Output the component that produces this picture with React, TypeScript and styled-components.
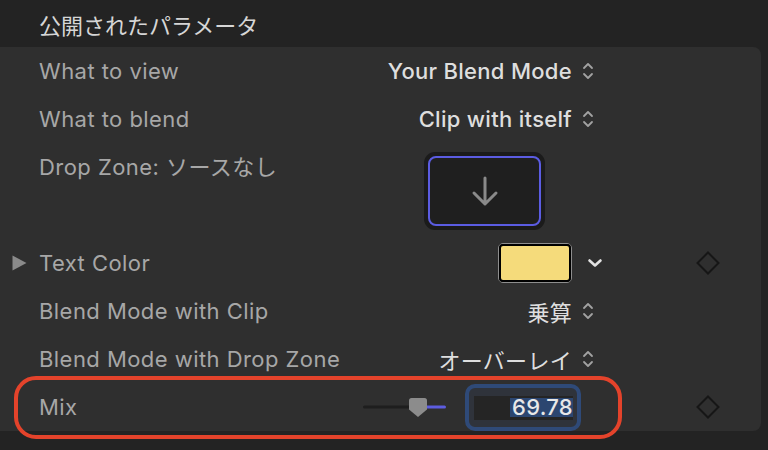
import styled, { createGlobalStyle } from 'styled-components'

const GlobalStyle = createGlobalStyle`
  html, body {
    margin: 0;
    padding: 0;
    background: #232323;
  }
  body {
    font-family: Inter, "Noto Sans CJK JP", sans-serif;
    -webkit-font-smoothing: antialiased;
  }
`

const Page = styled.div`
  width: 768px;
  height: 450px;
  display: flex;
  flex-direction: column;
  background: #232323;
  overflow: hidden;
`

const Header = styled.div`
  height: 47px;
  display: flex;
  align-items: center;
  padding-left: 39px;
  font-size: 22px;
  color: #d6d6d6;
`

const Panel = styled.div`
  position: relative;
  width: 761px;
  background: #2f2f2f;
  border-radius: 0 8px 8px 0;
  display: flex;
  flex-direction: column;
`

const Row = styled.div<{ $tall?: boolean }>`
  display: grid;
  grid-template-columns: 39px 1fr auto 40px 76px 40px 33px;
  align-items: center;
  height: ${(p) => (p.$tall ? 96 : 48)}px;
`

const Disclosure = styled.div`
  grid-column: 1;
  display: flex;
  justify-content: center;
`

const Label = styled.div<{ $top?: boolean }>`
  grid-column: 2;
  font-size: 22px;
  letter-spacing: 0.45px;
  color: #a7a7a7;
  white-space: nowrap;
  ${(p) => (p.$top ? 'align-self: start; line-height: 48px;' : '')}
`

const Control = styled.div`
  grid-column: 3;
  justify-self: end;
  display: flex;
  align-items: center;
`

const Value = styled.span<{ $plain?: boolean }>`
  font-size: 22px;
  letter-spacing: 0.3px;
  font-weight: ${(p) => (p.$plain ? 400 : 500)};
  color: #dedede;
  white-space: nowrap;
`

const Accessory = styled.div<{ $pad: number }>`
  grid-column: 4;
  display: flex;
  align-items: center;
  padding-left: ${(p) => p.$pad}px;
`

const Keyframe = styled.div`
  grid-column: 6;
  display: flex;
  justify-content: center;
`

const DropRing = styled.div`
  box-sizing: border-box;
  width: 121px;
  height: 78px;
  margin-right: 27px;
  padding: 4px;
  border-radius: 11px;
  background: #1b1b1b;
  display: flex;
`

const DropWell = styled.div`
  flex: 1;
  border: 2px solid #5b5ce2;
  border-radius: 8px;
  background: #1f1f1f;
  display: flex;
  align-items: center;
  justify-content: center;
`

const Swatch = styled.div`
  box-sizing: border-box;
  width: 74px;
  height: 40px;
  border: 1px solid #8e8e8e;
  border-radius: 5px;
  display: flex;
`

const SwatchFill = styled.div<{ $color: string }>`
  flex: 1;
  border: 2px solid #000;
  border-radius: 4px;
  background: ${(p) => p.$color};
`

const FieldRing = styled.div`
  box-sizing: border-box;
  margin-left: 19px;
  margin-right: -9px;
  padding: 8px 4px 7px 5px;
  border: 4px solid #2f4a78;
  border-radius: 10px;
  background: #2f333b;
`

const Field = styled.div`
  width: 99px;
  height: 24px;
  background: #252525;
  display: flex;
  align-items: center;
  justify-content: flex-end;
`

const Selected = styled.span`
  background: #2c4670;
  color: #e8e8e8;
  font-size: 22px;
  letter-spacing: 0.3px;
  font-weight: 500;
  line-height: 19px;
  padding-left: 2px;
`

const Highlight = styled.div`
  position: absolute;
  left: 14px;
  top: 329px;
  width: 608px;
  height: 63px;
  box-sizing: border-box;
  border: 4px solid #e4432b;
  border-radius: 22px;
  pointer-events: none;
`

const UpDown = () => (
  <svg width="12" height="22" viewBox="0 0 12 22">
    <path d="M2 8 L6 4 L10 8 M2 14 L6 18 L10 14" fill="none" stroke="#a2a2a2" strokeWidth="1.8" strokeLinecap="round" strokeLinejoin="round" />
  </svg>
)

const ChevronDown = () => (
  <svg width="16" height="12" viewBox="0 0 16 12">
    <path d="M2.5 3.5 L8 8.5 L13.5 3.5" fill="none" stroke="#e2e2e2" strokeWidth="2.6" strokeLinecap="round" strokeLinejoin="round" />
  </svg>
)

const Diamond = () => (
  <svg width="24" height="24" viewBox="0 0 24 24">
    <path d="M12 1.5 L22.5 12 L12 22.5 L1.5 12 Z" fill="none" stroke="#161616" strokeWidth="2" />
  </svg>
)

const Triangle = () => (
  <svg width="15" height="16" viewBox="0 0 15 16">
    <path d="M0.5 0.5 L14.5 8 L0.5 15.5 Z" fill="#8a8a8a" />
  </svg>
)

const ArrowDown = () => (
  <svg width="28" height="32" viewBox="0 0 28 32">
    <path d="M14 3 V29 M3 18 L14 29 L25 18" fill="none" stroke="#8a8a8a" strokeWidth="3" strokeLinecap="round" strokeLinejoin="round" />
  </svg>
)

const Slider = () => (
  <svg width="83" height="22" viewBox="0 0 83 22">
    <line x1="1.5" y1="11" x2="55" y2="11" stroke="#1e1e1e" strokeWidth="3" strokeLinecap="round" />
    <line x1="64" y1="11" x2="81.5" y2="11" stroke="#5d5de0" strokeWidth="3" strokeLinecap="round" />
    <path d="M48.5 2 H61.5 Q64 2 64 4.5 V13.5 L55 21 L46 13.5 V4.5 Q46 2 48.5 2 Z" fill="#8c8c8c" />
  </svg>
)

const App = () => {
  return (
    <Page>
      <GlobalStyle />
      <Header>公開されたパラメータ</Header>
      <Panel>
        <Row>
          <Label>What to view</Label>
          <Control>
            <Value>Your Blend Mode</Value>
          </Control>
          <Accessory $pad={10}>
            <UpDown />
          </Accessory>
        </Row>
        <Row>
          <Label>What to blend</Label>
          <Control>
            <Value>Clip with itself</Value>
          </Control>
          <Accessory $pad={10}>
            <UpDown />
          </Accessory>
        </Row>
        <Row $tall>
          <Label $top>Drop Zone: ソースなし</Label>
          <Control>
            <DropRing>
              <DropWell>
                <ArrowDown />
              </DropWell>
            </DropRing>
          </Control>
        </Row>
        <Row>
          <Disclosure>
            <Triangle />
          </Disclosure>
          <Label>Text Color</Label>
          <Control>
            <Swatch>
              <SwatchFill $color="#f5db7b" />
            </Swatch>
          </Control>
          <Accessory $pad={15}>
            <ChevronDown />
          </Accessory>
          <Keyframe>
            <Diamond />
          </Keyframe>
        </Row>
        <Row>
          <Label>Blend Mode with Clip</Label>
          <Control>
            <Value $plain>乗算</Value>
          </Control>
          <Accessory $pad={10}>
            <UpDown />
          </Accessory>
        </Row>
        <Row>
          <Label>Blend Mode with Drop Zone</Label>
          <Control>
            <Value $plain>オーバーレイ</Value>
          </Control>
          <Accessory $pad={10}>
            <UpDown />
          </Accessory>
        </Row>
        <Row>
          <Label>Mix</Label>
          <Control>
            <Slider />
            <FieldRing>
              <Field>
                <Selected>69.78</Selected>
              </Field>
            </FieldRing>
          </Control>
          <Keyframe>
            <Diamond />
          </Keyframe>
        </Row>
        <Highlight />
      </Panel>
    </Page>
  )
}

export default App
